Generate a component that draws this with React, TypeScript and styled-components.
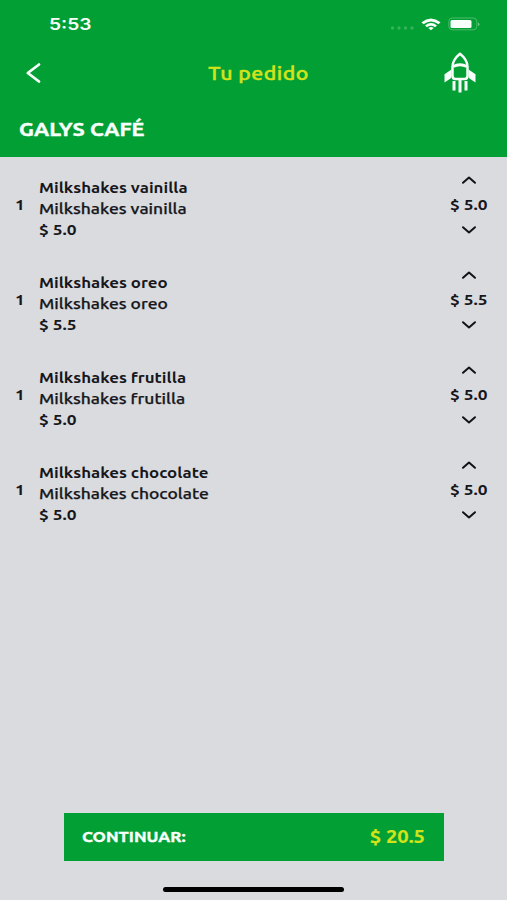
import React from "react";
import styled, { createGlobalStyle } from "styled-components";

const GREEN = "#029f35";
const LIME = "#d3e31b";
const WHITE = "#f8fffa";

const GlobalStyle = createGlobalStyle`
  *, *::before, *::after { box-sizing: border-box; }
  body { margin: 0; background: #dadbdf; }
  button { border: 0; padding: 0; margin: 0; background: none; font: inherit; color: inherit; cursor: pointer; }
`;

const Screen = styled.div`
  height: 900px;
  display: flex;
  flex-direction: column;
  background: #dadbdf;
  color: #16171b;
  font-family: Ubuntu, "Noto Sans", sans-serif;
  overflow: hidden;
`;

const Header = styled.header`
  height: 157px;
  flex: none;
  background: ${GREEN};
  color: ${WHITE};
`;

const StatusBar = styled.div`
  height: 47px;
  padding: 0 27px 0 49px;
  display: flex;
  align-items: center;
  justify-content: space-between;
`;

/* Wide letterforms: the glyphs are stretched sideways from one edge. */
const Wide = styled.span<{ $scale?: number; $origin?: string }>`
  display: inline-block;
  white-space: nowrap;
  transform: scaleX(${(p) => p.$scale ?? 1.19});
  transform-origin: ${(p) => p.$origin ?? "left"} center;
`;

const Clock = styled.div`
  font: 600 16px/20px Inter, sans-serif;
`;

const StatusIcons = styled.div`
  display: flex;
  align-items: center;
`;

const NavBar = styled.div`
  height: 52px;
  padding: 0 30px 0 25px;
  display: grid;
  grid-template-columns: 60px 1fr 34px;
  align-items: center;
`;

const BackButton = styled.button`
  width: 18px;
  height: 24px;
  display: flex;
`;

const Title = styled.h1`
  margin: 0;
  padding-right: 11px;
  text-align: center;
  font-size: 18px;
  line-height: 24px;
  font-weight: 500;
  letter-spacing: 0.4px;
  color: ${LIME};
  -webkit-text-stroke: 0.45px ${LIME};
`;

const StoreName = styled.h2`
  margin: 17px 0 0 19px;
  font-size: 18px;
  line-height: 26px;
  font-weight: 700;
  -webkit-text-stroke: 0.4px ${WHITE};
`;

const List = styled.ul`
  flex: 1;
  margin: 0;
  padding: 13.6px 0 0;
  list-style: none;
`;

const Item = styled.li`
  height: 95.1px;
  padding: 0 18px 0 15px;
  display: grid;
  grid-template-columns: 24px 1fr 40px;
  align-items: start;
  font-size: 14.5px;
  line-height: 21px;
  font-weight: 700;
`;

const Quantity = styled.div`
  padding-top: 23.4px;
`;

const Details = styled.div`
  display: flex;
  flex-direction: column;
  align-items: flex-start;
  padding-top: 6.4px;
`;

const Description = styled.div`
  font-weight: 500;
  -webkit-text-stroke: 0.25px #16171b;
`;

const Stepper = styled.div`
  display: flex;
  flex-direction: column;
  align-items: center;
`;

const StepButton = styled.button`
  width: 20px;
  height: 19px;
  display: flex;
  align-items: center;
  justify-content: center;
`;

const Amount = styled.div`
  height: 31px;
  line-height: 30px;
`;

const ContinueButton = styled.button`
  && {
    width: 380px;
    height: 48px;
    margin: 0 auto 26px 64px;
    padding: 0 19px 0 18px;
    flex: none;
    display: flex;
    align-items: center;
    justify-content: space-between;
    background: ${GREEN};
    color: ${WHITE};
    font-weight: 700;
    font-size: 15.2px;
    line-height: 24px;
    -webkit-text-stroke: 0.4px ${WHITE};
  }
`;

const Total = styled.span`
  color: ${LIME};
  font-size: 17.5px;
  -webkit-text-stroke: 0.2px ${LIME};
`;

const HomeIndicator = styled.div`
  width: 181px;
  height: 5px;
  margin: 0 auto 8px 163px;
  border-radius: 3px;
  background: #000;
  flex: none;
`;

type Order = { name: string; price: string };

const orders: Order[] = [
  { name: "Milkshakes vainilla", price: "$ 5.0" },
  { name: "Milkshakes oreo", price: "$ 5.5" },
  { name: "Milkshakes frutilla", price: "$ 5.0" },
  { name: "Milkshakes chocolate", price: "$ 5.0" },
];

const Chevron = ({ down = false }: { down?: boolean }) => (
  <svg width="16" height="10" viewBox="0 0 16 10" fill="none" stroke="#111216" strokeWidth="2" strokeLinecap="round" strokeLinejoin="round">
    <path d={down ? "M2 2.2 8 7.4 14 2.2" : "M2 7.8 8 2.6 14 7.8"} />
  </svg>
);

const Rocket = () => (
  <svg width="34" height="42" viewBox="0 0 34 42" fill="none" stroke={WHITE} strokeLinejoin="round">
    <path d="M9.500 24V15C9.500 9.500 13 5 17 1.800c4 3.200 7.500 7.700 7.500 13.200v9q0 3-3 3h-9q-3 0-3-3Z" strokeWidth="2.5" />
    <path d="M10 14.500Q17 11 24 14.500" strokeWidth="2.800" />
    <path d="M8.500 17.500v7l-1 2-6 4v-8.200ZM25.500 17.500v7l1 2 6 4v-8.200Z" fill={WHITE} stroke="none" />
    <path d="M11 29v9.500M17 28v12.500M23 29v9.500" strokeWidth="3" />
  </svg>
);

const StatusGlyphs = () => (
  <svg width="90" height="16" viewBox="0 0 90 16" fill="none">
    <g fill="#67c77e" opacity=".5">
      <circle cx="2.500" cy="12" r="1.700" />
      <circle cx="9" cy="12" r="1.700" />
      <circle cx="15.500" cy="12" r="1.700" />
      <circle cx="22" cy="12" r="1.700" />
    </g>
    <path d="M31.500 6.200Q41 -1.200 50.500 6.200L48.500 8.300Q41 2.500 33.500 8.300Z" fill={WHITE} />
    <path d="M35 9.400Q41 4.800 47 9.400L45 11.300Q41 8.400 37 11.300Z" fill={WHITE} />
    <path d="M38.300 12Q41 10.200 43.700 12L41 14.200Z" fill={WHITE} />
    <rect x="58.800" y="2" width="28" height="11.800" rx="3.500" stroke="#4fbb6c" />
    <rect x="60.500" y="3.900" width="21" height="8" rx="1.500" fill={WHITE} />
    <path d="M88 6.200q3 2 0 4Z" fill="#69c780" />
  </svg>
);

export default function App() {
  return (
    <Screen>
      <GlobalStyle />
      <Header>
        <StatusBar>
          <Clock><Wide $scale={1.2}>5:53</Wide></Clock>
          <StatusIcons><StatusGlyphs /></StatusIcons>
        </StatusBar>
        <NavBar>
          <BackButton aria-label="Volver">
            <svg width="18" height="24" viewBox="0 0 18 24" fill="none" stroke={WHITE} strokeWidth="2.8" strokeLinecap="round" strokeLinejoin="round">
              <path d="M14 3.500 2.800 12 14 20.500" />
            </svg>
          </BackButton>
          <Title><Wide $origin="center" $scale={1.18}>Tu pedido</Wide></Title>
          <Rocket />
        </NavBar>
        <StoreName><Wide $scale={1.2}>GALYS CAFÉ</Wide></StoreName>
      </Header>
      <List>
        {orders.map((o) => (
          <Item key={o.name}>
            <Quantity><Wide>1</Wide></Quantity>
            <Details>
              <Wide $scale={1.163}>{o.name}</Wide>
              <Description><Wide $scale={1.203}>{o.name}</Wide></Description>
              <Wide>{o.price}</Wide>
            </Details>
            <Stepper>
              <StepButton aria-label="Aumentar"><Chevron /></StepButton>
              <Amount><Wide $origin="center">{o.price}</Wide></Amount>
              <StepButton aria-label="Reducir"><Chevron down /></StepButton>
            </Stepper>
          </Item>
        ))}
      </List>
      <ContinueButton>
        <Wide $scale={1.12}>CONTINUAR:</Wide>
        <Total><Wide $origin="right" $scale={1.15}>{"$ 20.5"}</Wide></Total>
      </ContinueButton>
      <HomeIndicator />
    </Screen>
  );
}
